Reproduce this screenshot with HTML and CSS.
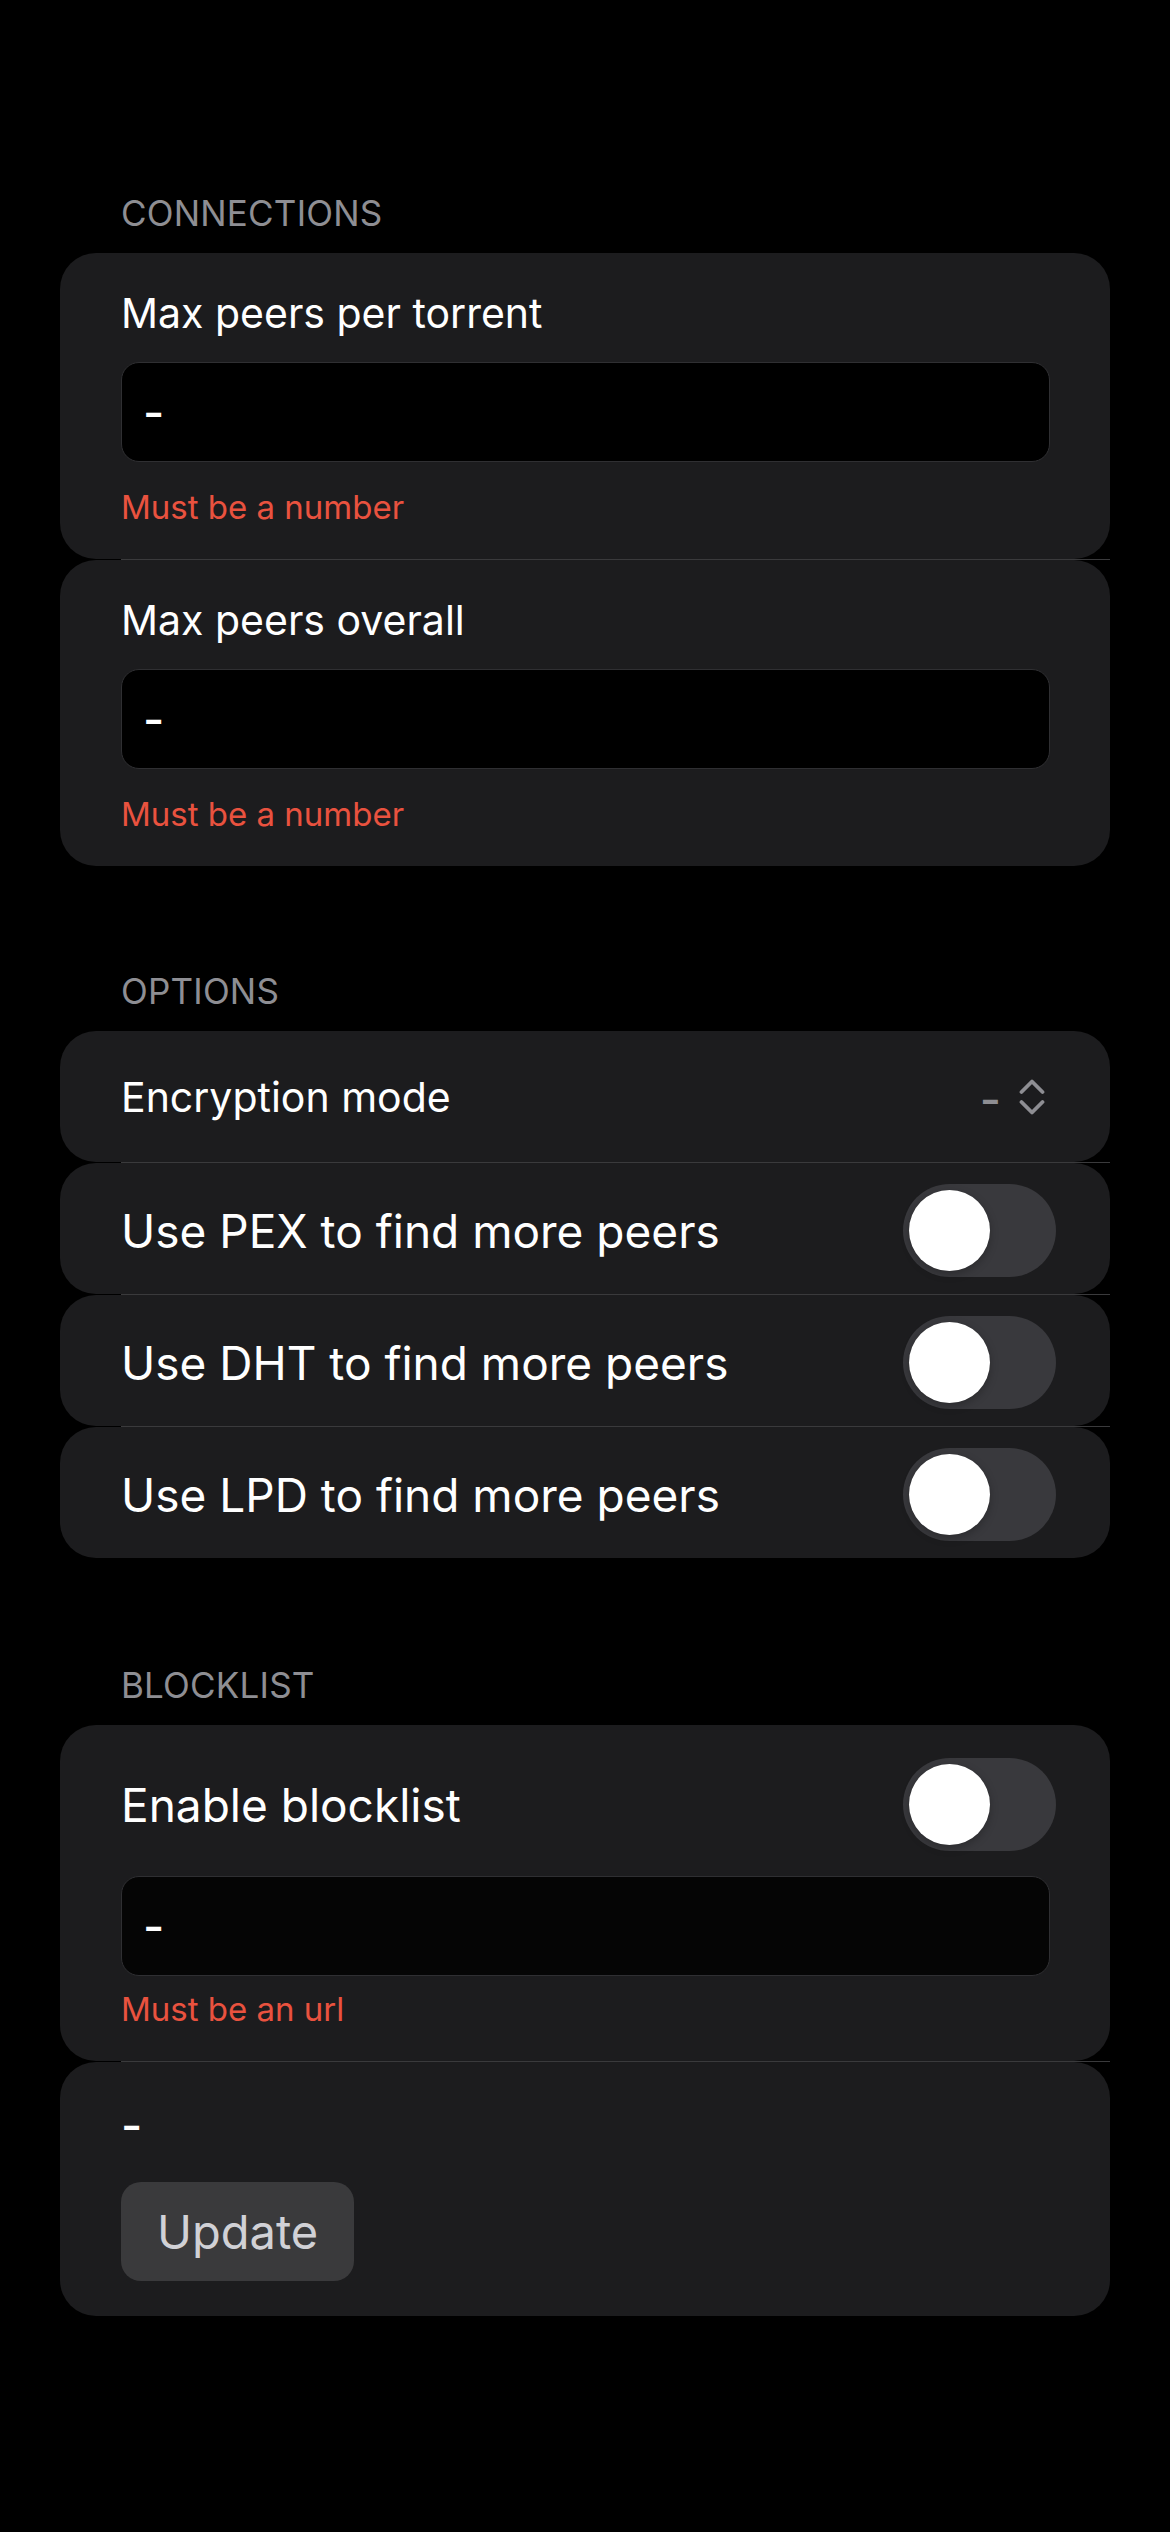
FILE: index.html
```html
<!DOCTYPE html>
<html lang="en">
<head>
<meta charset="utf-8">
<title>Settings</title>
<link rel="stylesheet" href="styles.css">
</head>
<body>
<main class="page">
  <section class="section">
    <h2 class="section-title">CONNECTIONS</h2>
    <div class="group">
      <div class="cell field-cell">
        <div class="field-label">Max peers per torrent</div>
        <div class="input"><span class="input-value">-</span></div>
        <div class="error">Must be a number</div>
      </div>
      <div class="sep"></div>
      <div class="cell field-cell">
        <div class="field-label">Max peers overall</div>
        <div class="input"><span class="input-value">-</span></div>
        <div class="error">Must be a number</div>
      </div>
    </div>
  </section>

  <section class="section">
    <h2 class="section-title">OPTIONS</h2>
    <div class="group">
      <div class="cell row-cell">
        <div class="field-label">Encryption mode</div>
        <div class="picker">
          <span class="picker-value">-</span>
          <svg class="chevrons" width="26" height="38" viewBox="0 0 26 38" aria-hidden="true">
            <path d="M2.5 14 L13 3.5 L23.5 14" fill="none" stroke="#8e8e93" stroke-width="3.8" stroke-linecap="round" stroke-linejoin="round"/>
            <path d="M2.5 24 L13 34.5 L23.5 24" fill="none" stroke="#8e8e93" stroke-width="3.8" stroke-linecap="round" stroke-linejoin="round"/>
          </svg>
        </div>
      </div>
      <div class="sep"></div>
      <div class="cell row-cell toggle-cell">
        <div class="row-label">Use PEX to find more peers</div>
        <div class="switch"><div class="knob"></div></div>
      </div>
      <div class="sep"></div>
      <div class="cell row-cell toggle-cell">
        <div class="row-label">Use DHT to find more peers</div>
        <div class="switch"><div class="knob"></div></div>
      </div>
      <div class="sep"></div>
      <div class="cell row-cell toggle-cell">
        <div class="row-label">Use LPD to find more peers</div>
        <div class="switch"><div class="knob"></div></div>
      </div>
    </div>
  </section>

  <section class="section section-last">
    <h2 class="section-title">BLOCKLIST</h2>
    <div class="group">
      <div class="cell blocklist-cell">
        <div class="toggle-line">
          <div class="row-label">Enable blocklist</div>
          <div class="switch"><div class="knob"></div></div>
        </div>
        <div class="input input-dim"><span class="input-value">-</span></div>
        <div class="error error-tight">Must be an url</div>
      </div>
      <div class="sep"></div>
      <div class="cell update-cell">
        <div class="status-text">-</div>
        <button class="update-btn" type="button">Update</button>
      </div>
    </div>
  </section>
</main>
</body>
</html>
```

FILE: styles.css
```css
* {
  box-sizing: border-box;
}

html, body {
  margin: 0;
  padding: 0;
  background: #000;
}

body {
  width: 1170px;
  min-height: 2532px;
  font-family: Inter, "Noto Sans", "Liberation Sans", sans-serif;
  color: #fff;
}

.page {
  padding: 192px 60px 200px 60px;
  display: flex;
  flex-direction: column;
}

.section + .section {
  margin-top: 104px;
}

.section + .section-last {
  margin-top: 106px;
}

.section-title {
  margin: 0 0 19px 61px;
  font-size: 35px;
  line-height: 42px;
  font-weight: 400;
  color: #8e8e93;
  letter-spacing: 0.2px;
}

.group {
  display: flex;
  flex-direction: column;
}

.cell {
  background: #1c1c1e;
  border-radius: 36px;
  padding: 0 61px;
}

.sep {
  height: 1px;
  margin-left: 61px;
  background: #3a3a3c;
}

.field-cell {
  height: 306px;
  padding-top: 35px;
  display: flex;
  flex-direction: column;
}

.field-label {
  font-size: 41px;
  line-height: 50px;
  color: #fff;
}

.input {
  height: 100px;
  border: 1.5px solid #2f2f32;
  border-radius: 18px;
  background: #000;
  display: flex;
  align-items: center;
  padding-left: 21px;
  margin-top: 24px;
  margin-right: -1px;
}

.input-dim {
  background: #050505;
  margin-top: 25px;
}

.input-value {
  font-size: 46px;
  line-height: 50px;
  font-weight: 500;
  color: #fff;
}

.error {
  margin-top: 25px;
  font-size: 33px;
  line-height: 40px;
  color: #e9523f;
}

.error-tight {
  margin-top: 13px;
}

.row-cell {
  height: 131px;
  display: flex;
  align-items: center;
  justify-content: space-between;
}

.toggle-cell {
  padding-top: 4px;
}

.row-label {
  font-size: 46px;
  line-height: 54px;
  color: #fff;
}

.picker {
  display: flex;
  align-items: center;
  gap: 18px;
  margin-right: 4px;
}

.picker-value {
  font-size: 46px;
  line-height: 50px;
  font-weight: 500;
  color: #8e8e93;
  position: relative;
  top: 2px;
}

.chevrons {
  display: block;
}

.switch {
  width: 153px;
  height: 93px;
  border-radius: 47px;
  background: #39393d;
  padding: 6px;
  margin-right: -7px;
  flex-shrink: 0;
}

.knob {
  width: 81px;
  height: 81px;
  border-radius: 50%;
  background: #fff;
  box-shadow: 0 3px 8px rgba(0, 0, 0, 0.25), 0 0 1px rgba(0, 0, 0, 0.2);
}

.blocklist-cell {
  padding-top: 33px;
  padding-bottom: 32px;
  display: flex;
  flex-direction: column;
}

.toggle-line {
  display: flex;
  align-items: center;
  justify-content: space-between;
}

.update-cell {
  padding-top: 36px;
  padding-bottom: 35px;
  display: flex;
  flex-direction: column;
  align-items: flex-start;
}

.status-text {
  font-size: 46px;
  line-height: 54px;
  font-weight: 500;
  color: #fff;
}

.update-btn {
  margin-top: 30px;
  height: 99px;
  padding: 0 36px;
  border: none;
  border-radius: 20px;
  background: #3a3a3c;
  color: #d1d1d6;
  font-family: inherit;
  font-size: 47px;
  line-height: 54px;
}
```
